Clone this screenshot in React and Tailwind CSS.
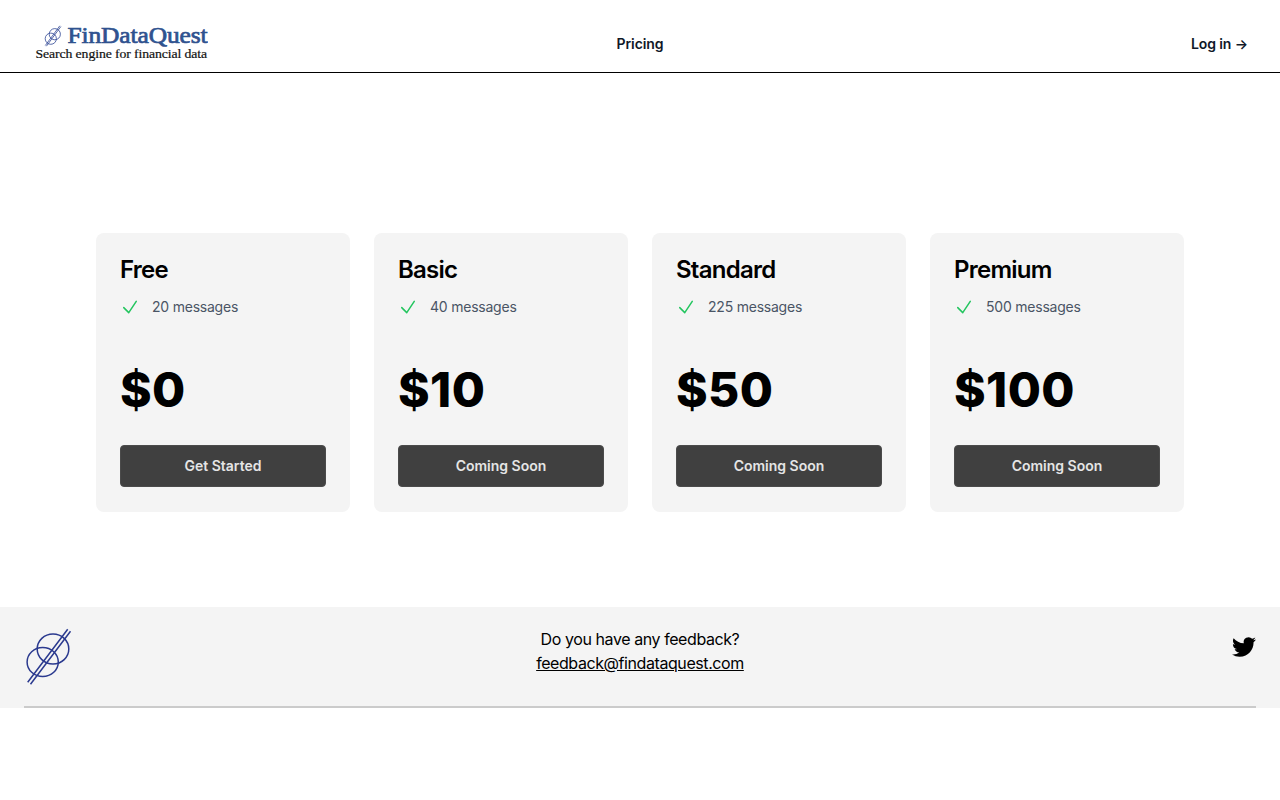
import React from 'react';

const plans = [
    { name: 'Free', messages: 20, price: 0, action: 'Get Started' },
    { name: 'Basic', messages: 40, price: 10, action: 'Coming Soon' },
    { name: 'Standard', messages: 225, price: 50, action: 'Coming Soon' },
    { name: 'Premium', messages: 500, price: 100, action: 'Coming Soon' },
];

const LogoMark = ({ className }) => (
    <svg className={className} viewBox="0 0 48 60" fill="none" stroke="#2b3a8f" strokeWidth="1.5">
        <ellipse cx="29" cy="22" rx="15.8" ry="15" />
        <ellipse cx="18.7" cy="35" rx="15.6" ry="14.6" />
        <path d="M3.7 55.3 43.7 2.3M6.5 57.3 46.5 4.3" />
    </svg>
);

const Wordmark = () => (
    <svg className="h-10 w-44" viewBox="0 0 176 40" fontFamily="'Liberation Serif', serif" fontWeight="400">
        <text x="35.5" y="20" fontSize="23" fill="#2f528f" stroke="#2f528f" strokeWidth="0.7" textLength="140" lengthAdjust="spacingAndGlyphs">
            FinDataQuest
        </text>
        <text x="3.5" y="35" fontSize="12.5" fill="#111" stroke="#111" strokeWidth="0.2" textLength="171.5" lengthAdjust="spacingAndGlyphs">
            Search engine for financial data
        </text>
        <g fill="none" stroke="#2f4694" strokeWidth="0.8">
            <circle cx="22.8" cy="11.2" r="5.6" />
            <circle cx="18.8" cy="15.7" r="5.6" />
            <path d="M13.3 22.5 27.8 2.8M14.4 23.2 28.9 3.5" />
        </g>
    </svg>
);

const Header = () => (
    <header className="flex h-[73px] items-center border-b border-black px-8 text-sm font-semibold tracking-[-0.1px] text-gray-900">
        <div className="flex flex-1 pt-[13px]">
            <Wordmark />
        </div>
        <a href="#" className="pt-4">Pricing</a>
        <div className="flex flex-1 justify-end pt-4">
            <a href="#">Log in <span aria-hidden="true">→</span></a>
        </div>
    </header>
);

const PlanCard = ({ plan }) => (
    <div className="flex flex-col rounded-lg bg-[#f4f4f4] px-6 pt-[21px] pb-[25px]">
        <h2 className="text-2xl font-semibold tracking-[-0.75px] text-black">{plan.name}</h2>
        <div className="mt-[11px] flex items-center gap-3 text-sm tracking-[-0.22px] text-gray-600">
            <svg className="size-5 text-[#22c55e]" viewBox="0 0 24 24" fill="none" stroke="currentColor" strokeWidth="1.8" strokeLinecap="round" strokeLinejoin="round">
                <path d="m4.5 12.75 6 6 9-13.5" />
            </svg>
            <span>{plan.messages} messages</span>
        </div>
        <p className="mt-[49px] text-5xl font-extrabold tracking-[0.4px] text-black">${plan.price}</p>
        <button className="mt-[31px] h-[42px] rounded border border-[#4b4b4b] bg-[#404040] text-sm font-semibold text-[#e5e5e5]">
            {plan.action}
        </button>
    </div>
);

const Footer = () => (
    <footer className="h-[101px] bg-[#f4f4f4] px-6">
        <div className="grid h-full grid-cols-3 border-b-2 border-[#cbcbcb] pt-5">
            <LogoMark className="h-[60px] w-12" />
            <div className="text-center text-base tracking-[-0.42px] text-black">
                <p>Do you have any feedback?</p>
                <a href="mailto:feedback@findataquest.com" className="underline">feedback@findataquest.com</a>
            </div>
            <a href="#" aria-label="Twitter" className="mt-2 justify-self-end text-black">
                <svg className="size-6" viewBox="0 0 24 24" fill="currentColor">
                    <path d="M23.953 4.57a10 10 0 01-2.825.775 4.958 4.958 0 002.163-2.723c-.951.555-2.005.959-3.127 1.184a4.92 4.92 0 00-8.384 4.482C7.69 8.095 4.067 6.13 1.64 3.162a4.822 4.822 0 00-.666 2.475c0 1.71.87 3.213 2.188 4.096a4.904 4.904 0 01-2.228-.616v.06a4.923 4.923 0 003.946 4.827 4.996 4.996 0 01-2.212.085 4.936 4.936 0 004.604 3.417 9.867 9.867 0 01-6.102 2.105c-.39 0-.779-.023-1.17-.067a13.995 13.995 0 007.557 2.209c9.053 0 13.998-7.496 13.998-13.985 0-.21 0-.42-.015-.63A9.935 9.935 0 0024 4.59z" />
                </svg>
            </a>
        </div>
    </footer>
);

export default function App() {
    return (
        <div className="min-h-screen bg-white font-['Inter',sans-serif]">
            <Header />
            <main className="grid grid-cols-4 gap-6 px-24 pt-40 pb-[95px]">
                {plans.map((plan) => (
                    <PlanCard key={plan.name} plan={plan} />
                ))}
            </main>
            <Footer />
        </div>
    );
}
